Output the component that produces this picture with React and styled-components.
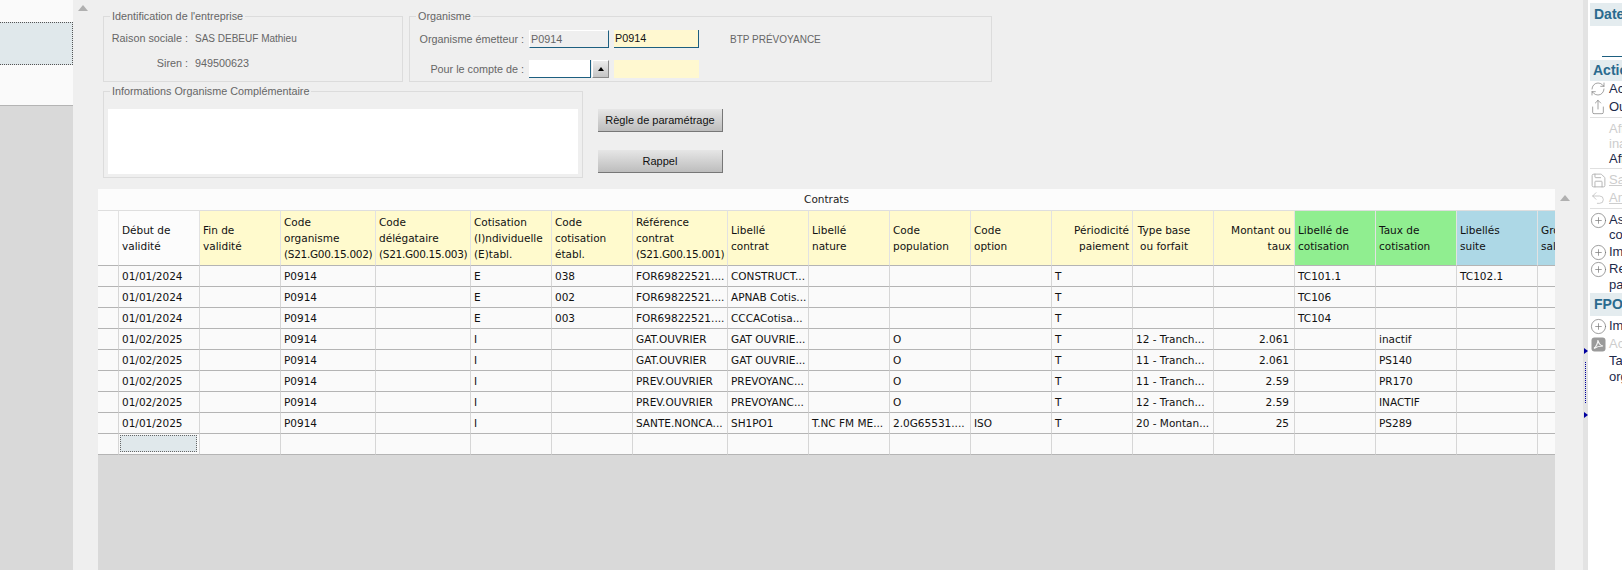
import styled, { createGlobalStyle } from 'styled-components';
import { RefreshCw, Share, Save, Undo2, CirclePlus } from 'lucide-react';

const GlobalStyle = createGlobalStyle`
    html, body {
        margin: 0;
        padding: 0;
        background: #efefef;
        overflow: hidden;
    }
`;

const Page = styled.div`
    display: flex;
    width: 1622px;
    height: 570px;
    overflow: hidden;
    font-family: "Liberation Sans", Arial, sans-serif;
`;

/* left list */
const LeftPanel = styled.div`
    width: 73px;
    height: 570px;
    flex-shrink: 0;
    display: flex;
    flex-direction: column;
    background: #d9d9d9;
`;

const LeftList = styled.div`
    height: 106px;
    padding-top: 22px;
    box-sizing: border-box;
    background: #fafafa;
    border-bottom: 1px solid #b4b4b4;
`;

const LeftSelected = styled.div`
    height: 43px;
    box-sizing: border-box;
    background: #e0e8eb;
    border: 1px dotted #555;
    border-left: none;
`;

/* main zone */
const Main = styled.div`
    flex: 1;
    display: flex;
    flex-direction: column;
    background: #efefef;
`;

const TopZone = styled.div`
    display: flex;
    height: 189px;
    flex-shrink: 0;
`;

const ScrollUp = styled.div`
    width: 0;
    height: 0;
    flex-shrink: 0;
    margin: ${props => props.$margin};
    border-left: 5px solid transparent;
    border-right: 5px solid transparent;
    border-bottom: 6px solid #b0b0b0;
`;

const Forms = styled.div`
    display: flex;
    flex-direction: column;
    margin-left: 15px;
`;

const FormRow = styled.div`
    display: flex;
    gap: 6px;
`;

const Group = styled.fieldset`
    box-sizing: border-box;
    width: ${props => props.$width}px;
    height: ${props => props.$height}px;
    margin: ${props => props.$margin || 0};
    padding: 0;
    border: 1px solid #dcdcdc;
    min-width: 0;
`;

const GroupTitle = styled.legend`
    margin-left: 6px;
    padding: 0 2px;
    font-size: 10.8px;
    line-height: 13px;
    color: #666;
`;

const InfoGrid = styled.div`
    display: grid;
    grid-template-columns: 83px auto;
    column-gap: 7px;
    row-gap: 12px;
    padding-top: 9px;
    padding-left: 1px;
    font-size: 10.8px;
    line-height: 13px;
    color: #666;
`;

const InfoLabel = styled.div`
    text-align: right;
    white-space: nowrap;
`;

const CapsValue = styled.div`
    font-size: 10px;
    white-space: nowrap;
`;

const OrgGrid = styled.div`
    display: grid;
    grid-template-columns: 114px 80px 85px auto;
    grid-auto-rows: 18px;
    column-gap: 5px;
    row-gap: 12px;
    padding-top: 7px;
    font-size: 10.8px;
    color: #666;
    align-items: center;
`;

const OrgLabel = styled.div`
    text-align: right;
    white-space: nowrap;
`;

const Field = styled.div`
    box-sizing: border-box;
    height: 18px;
    padding-left: 1px;
    line-height: 17px;
    font-size: 10.8px;
    white-space: nowrap;
    color: ${props => props.$yellow ? '#111' : '#666'};
    background: ${props => props.$yellow ? '#fff8d0' : props.$white ? '#fff' : '#efefef'};
    border-top: ${props => props.$yellow || props.$white ? 'none' : '1px solid #fff'};
    border-left: ${props => props.$yellow || props.$white ? 'none' : '1px solid #fff'};
    border-right: ${props => props.$flat ? 'none' : '1px solid #1d5f80'};
    border-bottom: ${props => props.$flat ? 'none' : '1px solid #1d5f80'};
`;

const Combo = styled.div`
    display: flex;
    gap: 1px;
`;

const ComboInput = styled(Field)`
    flex: 1;
`;

const ComboButton = styled.div`
    width: 17px;
    height: 18px;
    box-sizing: border-box;
    display: flex;
    align-items: center;
    justify-content: center;
    background: linear-gradient(#ececec, #c4c4c4);
    border: 1px solid #fff;
    border-right-color: #8a8a8a;
    border-bottom-color: #8a8a8a;

    &::after {
        content: "";
        border-left: 3px solid transparent;
        border-right: 3px solid transparent;
        border-bottom: 4px solid #000;
    }
`;

const OrgName = styled.div`
    padding-left: 26px;
    font-size: 10px;
    white-space: nowrap;
`;

const MemoBox = styled.div`
    height: 65px;
    margin: 11px 4px 0 4px;
    background: #fff;
`;

const ButtonColumn = styled.div`
    display: flex;
    flex-direction: column;
    gap: 18px;
    margin: 27px 0 0 9px;
`;

const GreyButton = styled.div`
    box-sizing: border-box;
    width: 125px;
    height: 23px;
    display: flex;
    align-items: center;
    justify-content: center;
    font-size: 11px;
    color: #111;
    background: linear-gradient(#e6e6e6, #bdbdbd);
    border-right: 1px solid #777;
    border-bottom: 1px solid #777;
`;

/* grid */
const GridZone = styled.div`
    flex: 1;
    display: flex;
`;

const GridPanel = styled.div`
    width: 1457px;
    height: 381px;
    margin-left: 25px;
    flex-shrink: 0;
    background: #d9d9d9;
    overflow: hidden;
`;

const GridTitle = styled.div`
    height: 21px;
    line-height: 20px;
    text-align: center;
    background: #fcfcfc;
    font-family: "DejaVu Sans", Verdana, sans-serif;
    font-size: 10.5px;
    color: #222;
`;

const Table = styled.table`
    table-layout: fixed;
    border-collapse: separate;
    border-spacing: 0;
    width: 1521px;
    font-family: "DejaVu Sans", Verdana, sans-serif;
    font-size: 10.5px;
    color: #111;
`;

const HeaderCell = styled.th`
    box-sizing: border-box;
    height: 56px;
    padding: 0 ${props => props.$align === 'center' ? '21px' : '3px'} 0 3px;
    font-weight: normal;
    line-height: 16px;
    vertical-align: middle;
    text-align: ${props => props.$align || 'left'};
    color: #111;
    background: ${props => props.$color || '#fffacd'};
    border-top: 1px solid #dedede;
    border-right: 1px solid #e2e2e2;
    border-bottom: 1px solid #b4b4b4;
`;

const HeaderLine = styled.div`
    white-space: nowrap;
    letter-spacing: ${props => props.$tight ? '-0.3px' : 'normal'};
`;

const Cell = styled.td`
    box-sizing: border-box;
    height: 21px;
    padding: 0 5px 0 3px;
    white-space: nowrap;
    overflow: hidden;
    text-align: ${props => props.$right ? 'right' : 'left'};
    background: #fafafa;
    border-right: 1px solid #d6d6d6;
    border-bottom: 1px solid #b4b4b4;
`;

const FocusCell = styled(Cell)`
    padding: 1px 2px 2px 1px;
`;

const FocusBox = styled.div`
    height: 100%;
    min-height: 17px;
    background: #e0e8eb;
    border: 1px dotted #666;
    box-sizing: border-box;
`;

const Gutter = styled.div`
    flex: 1;
    display: flex;
    padding: 6px 0 0 5px;
`;

/* right side */
const Splitter = styled.div`
    width: 5px;
    flex-shrink: 0;
    background: #e3e3e3;
    display: flex;
    flex-direction: column;
    align-items: flex-start;
    padding-top: 348px;
    box-sizing: border-box;
`;

const SplitArrow = styled.div`
    width: 0;
    height: 0;
    margin-left: 1px;
    border-top: 3.5px solid transparent;
    border-bottom: 3.5px solid transparent;
    border-left: 4px solid #0000a0;
`;

const SplitDots = styled.div`
    height: 41px;
    margin: 8px 0 9px 2px;
    border-left: 1px dotted #0000a0;
`;

const Side = styled.div`
    width: 34px;
    flex-shrink: 0;
    height: 570px;
    box-sizing: border-box;
    padding: 3px 0 0 2px;
    background: #fff;
    overflow: hidden;
    font-size: 13px;
    line-height: 16px;
    color: #1d2a4a;
    white-space: nowrap;
`;

const SideHeader = styled.div`
    height: ${props => props.$height}px;
    line-height: ${props => props.$height}px;
    padding-left: ${props => props.$pad}px;
    margin-bottom: ${props => props.$after || 0}px;
    background: #e4ecef;
    font-size: 14px;
    font-weight: bold;
    color: #2a6a8e;
`;

const DateBox = styled.div`
    height: 31px;
    margin-left: 12px;
    border-bottom: 1px solid #1d5f80;
    box-sizing: border-box;
    margin-bottom: 3px;
`;

const SideRow = styled.div`
    display: flex;
    align-items: flex-start;
    min-height: ${props => props.$h || 18}px;
    height: ${props => props.$h ? `${props.$h}px` : 'auto'};
    color: ${props => props.$muted ? '#cdcdcd' : '#1d2a4a'};
`;

const IconSlot = styled.div`
    width: 19px;
    height: 16px;
    flex-shrink: 0;
    display: flex;
    align-items: center;
    justify-content: center;
    padding-right: 3px;
    box-sizing: border-box;
    color: ${props => props.$muted ? '#b0b0b0' : '#777'};

    svg {
        flex-shrink: 0;
    }
`;

const SideText = styled.div`
    line-height: ${props => props.$lh || 16}px;
    text-decoration: ${props => props.$underline ? 'underline' : 'none'};
`;

const SideRule = styled.div`
    height: 1px;
    margin-bottom: ${props => props.$after}px;
    background: #e0e0e0;
`;

const columns = [
    { w: 21 },
    { w: 81, label: ['Début de', 'validité'], color: '#fcfcfc' },
    { w: 81, label: ['Fin de', 'validité'] },
    { w: 95, label: ['Code', 'organisme', '(S21.G00.15.002)'] },
    { w: 95, label: ['Code', 'délégataire', '(S21.G00.15.003)'] },
    { w: 81, label: ['Cotisation', '(I)ndividuelle', '(E)tabl.'] },
    { w: 81, label: ['Code', 'cotisation', 'établ.'] },
    { w: 95, label: ['Référence', 'contrat', '(S21.G00.15.001)'] },
    { w: 81, label: ['Libellé', 'contrat'] },
    { w: 81, label: ['Libellé', 'nature'] },
    { w: 81, label: ['Code', 'population'] },
    { w: 81, label: ['Code', 'option'] },
    { w: 81, label: ['Périodicité', 'paiement'], align: 'right' },
    { w: 81, label: ['Type base', 'ou forfait'], align: 'center' },
    { w: 81, label: ['Montant ou', 'taux'], align: 'right', right: true },
    { w: 81, label: ['Libellé de', 'cotisation'], color: '#90ee90' },
    { w: 81, label: ['Taux de', 'cotisation'], color: '#90ee90' },
    { w: 81, label: ['Libellés', 'suite'], color: '#add8e6' },
    { w: 81, label: ['Groupe', 'salarié'], color: '#add8e6' },
];

const rows = [
    ['01/01/2024', '', 'P0914', '', 'E', '038', 'FOR69822521....', 'CONSTRUCT...', '', '', '', 'T', '', '', 'TC101.1', '', 'TC102.1', ''],
    ['01/01/2024', '', 'P0914', '', 'E', '002', 'FOR69822521....', 'APNAB Cotis...', '', '', '', 'T', '', '', 'TC106', '', '', ''],
    ['01/01/2024', '', 'P0914', '', 'E', '003', 'FOR69822521....', 'CCCACotisa...', '', '', '', 'T', '', '', 'TC104', '', '', ''],
    ['01/02/2025', '', 'P0914', '', 'I', '', 'GAT.OUVRIER', 'GAT OUVRIE...', '', 'O', '', 'T', '12 - Tranch...', '2.061', '', 'inactif', '', ''],
    ['01/02/2025', '', 'P0914', '', 'I', '', 'GAT.OUVRIER', 'GAT OUVRIE...', '', 'O', '', 'T', '11 - Tranch...', '2.061', '', 'PS140', '', ''],
    ['01/02/2025', '', 'P0914', '', 'I', '', 'PREV.OUVRIER', 'PREVOYANC...', '', 'O', '', 'T', '11 - Tranch...', '2.59', '', 'PR170', '', ''],
    ['01/02/2025', '', 'P0914', '', 'I', '', 'PREV.OUVRIER', 'PREVOYANC...', '', 'O', '', 'T', '12 - Tranch...', '2.59', '', 'INACTIF', '', ''],
    ['01/01/2025', '', 'P0914', '', 'I', '', 'SANTE.NONCA...', 'SH1PO1', 'T.NC FM ME...', '2.0G65531....', 'ISO', 'T', '20 - Montan...', '25', '', 'PS289', '', ''],
];

const PdfIcon = () => (
    <svg width="15" height="15" viewBox="0 0 15 15">
        <rect x="0.5" y="0.5" width="14" height="14" rx="3" fill="#9a9a9a" />
        <path d="M3 11.5 C5 10 7 6 7 3 C7.5 6 9 8.5 12 9 C9 9 6 9.5 3 11.5 Z" fill="none" stroke="#f4f4f4" strokeWidth="1.2" />
    </svg>
);

const App = () => {
    return (
        <Page>
            <GlobalStyle />
            <LeftPanel>
                <LeftList>
                    <LeftSelected />
                </LeftList>
            </LeftPanel>

            <Main>
                <TopZone>
                    <ScrollUp $margin="5px 0 0 5px" />
                    <Forms>
                        <FormRow>
                            <Group $width={300} $height={72} $margin="10px 0 0 0">
                                <GroupTitle>Identification de l'entreprise</GroupTitle>
                                <InfoGrid>
                                    <InfoLabel>Raison sociale :</InfoLabel>
                                    <CapsValue>SAS DEBEUF Mathieu</CapsValue>
                                    <InfoLabel>Siren :</InfoLabel>
                                    <div>949500623</div>
                                </InfoGrid>
                            </Group>
                            <Group $width={583} $height={72} $margin="10px 0 0 0">
                                <GroupTitle>Organisme</GroupTitle>
                                <OrgGrid>
                                    <OrgLabel>Organisme émetteur :</OrgLabel>
                                    <Field>P0914</Field>
                                    <Field $yellow>P0914</Field>
                                    <OrgName>BTP PRÉVOYANCE</OrgName>
                                    <OrgLabel>Pour le compte de :</OrgLabel>
                                    <Combo>
                                        <ComboInput $white />
                                        <ComboButton />
                                    </Combo>
                                    <Field $yellow $flat />
                                </OrgGrid>
                            </Group>
                        </FormRow>
                        <FormRow>
                            <Group $width={480} $height={93} $margin="3px 0 0 0">
                                <GroupTitle>Informations Organisme Complémentaire</GroupTitle>
                                <MemoBox />
                            </Group>
                            <ButtonColumn>
                                <GreyButton>Règle de paramétrage</GreyButton>
                                <GreyButton>Rappel</GreyButton>
                            </ButtonColumn>
                        </FormRow>
                    </Forms>
                </TopZone>

                <GridZone>
                    <GridPanel>
                        <GridTitle>Contrats</GridTitle>
                        <Table>
                            <colgroup>
                                {columns.map((col, i) => <col key={i} width={col.w} />)}
                            </colgroup>
                            <thead>
                                <tr>
                                    {columns.map((col, i) => (
                                        <HeaderCell key={i} $color={col.color || (i === 0 ? '#fcfcfc' : undefined)} $align={col.align}>
                                            {col.label && col.label.map((line, j) => (
                                                <HeaderLine key={j} $tight={line.startsWith('(S21')}>{line}</HeaderLine>
                                            ))}
                                        </HeaderCell>
                                    ))}
                                </tr>
                            </thead>
                            <tbody>
                                {rows.map((row, r) => (
                                    <tr key={r}>
                                        <Cell />
                                        {row.map((value, c) => (
                                            <Cell key={c} $right={columns[c + 1].right}>{value}</Cell>
                                        ))}
                                    </tr>
                                ))}
                                <tr>
                                    <Cell />
                                    <FocusCell><FocusBox /></FocusCell>
                                    {columns.slice(2).map((col, i) => <Cell key={i} />)}
                                </tr>
                            </tbody>
                        </Table>
                    </GridPanel>
                    <Gutter>
                        <ScrollUp />
                    </Gutter>
                </GridZone>
            </Main>

            <Splitter>
                <SplitArrow />
                <SplitDots />
                <SplitArrow />
            </Splitter>

            <Side>
                <SideHeader $height={23} $pad={4}>Dates</SideHeader>
                <DateBox />
                <SideHeader $height={21} $pad={3}>Actions</SideHeader>
                <SideRow>
                    <IconSlot><RefreshCw size={16} strokeWidth={1} /></IconSlot>
                    <SideText>Actualiser</SideText>
                </SideRow>
                <SideRow>
                    <IconSlot><Share size={16} strokeWidth={1} /></IconSlot>
                    <SideText>Outils</SideText>
                </SideRow>
                <SideRule $after={3} />
                <SideRow $muted>
                    <IconSlot />
                    <SideText $lh={15}>Afficher les<br />inactifs</SideText>
                </SideRow>
                <SideRow $h={17}>
                    <IconSlot />
                    <SideText>Afficher</SideText>
                </SideRow>
                <SideRule $after={3} />
                <SideRow $muted>
                    <IconSlot $muted><Save size={17} strokeWidth={1.3} /></IconSlot>
                    <SideText $underline>Sauvegarder</SideText>
                </SideRow>
                <SideRow $muted>
                    <IconSlot $muted><Undo2 size={16} strokeWidth={1} /></IconSlot>
                    <SideText $underline>Annuler</SideText>
                </SideRow>
                <SideRule $after={3} />
                <SideRow $h={32}>
                    <IconSlot><CirclePlus size={17} strokeWidth={1} /></IconSlot>
                    <SideText $lh={15}>Associer<br />contrat</SideText>
                </SideRow>
                <SideRow $h={17}>
                    <IconSlot><CirclePlus size={17} strokeWidth={1} /></IconSlot>
                    <SideText>Importer</SideText>
                </SideRow>
                <SideRow>
                    <IconSlot><CirclePlus size={17} strokeWidth={1} /></IconSlot>
                    <SideText>Rechercher<br />par</SideText>
                </SideRow>
                <SideHeader $height={23} $pad={4} $after={2}>FPOC</SideHeader>
                <SideRow>
                    <IconSlot><CirclePlus size={17} strokeWidth={1} /></IconSlot>
                    <SideText>Importer</SideText>
                </SideRow>
                <SideRow $muted $h={17}>
                    <IconSlot><PdfIcon /></IconSlot>
                    <SideText>Acrobat</SideText>
                </SideRow>
                <SideRow>
                    <IconSlot />
                    <SideText>Taux<br />organisme</SideText>
                </SideRow>
            </Side>
        </Page>
    );
};

export default App;
